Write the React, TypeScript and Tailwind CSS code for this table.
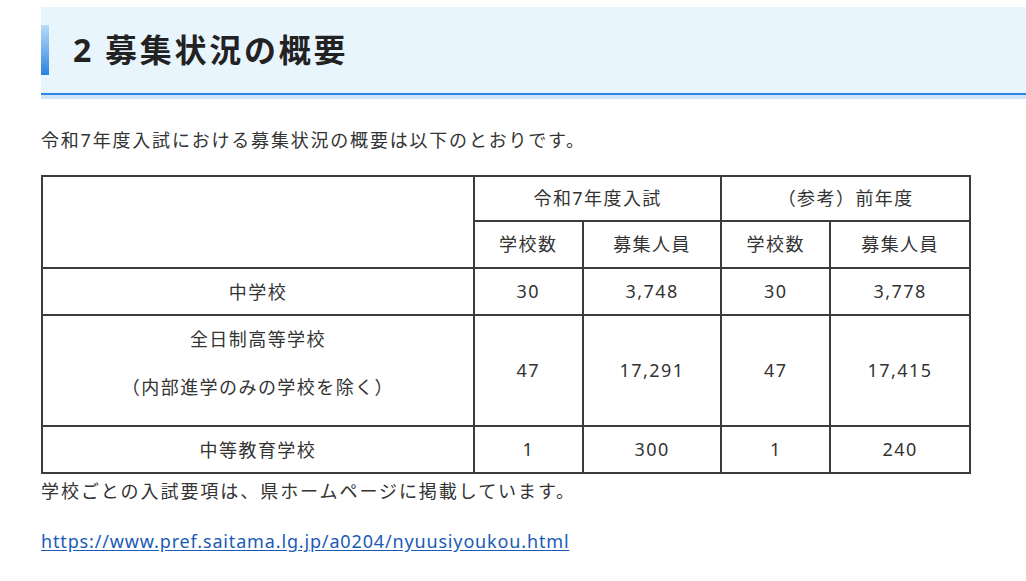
const font = {
  fontFamily: '"Noto Sans", "Noto Sans CJK JP", sans-serif',
};

type Row = {
  label: string[];
  cur: [string, string];
  prev: [string, string];
  tall?: boolean;
};

const rows: Row[] = [
  { label: ["中学校"], cur: ["30", "3,748"], prev: ["30", "3,778"] },
  {
    label: ["全日制高等学校", "（内部進学のみの学校を除く）"],
    cur: ["47", "17,291"],
    prev: ["47", "17,415"],
    tall: true,
  },
  { label: ["中等教育学校"], cur: ["1", "300"], prev: ["1", "240"] },
];

const cell = "border-2 border-[#3c3c3c] text-center align-middle";

export default function App() {
  return (
    <div
      className="w-[1026px] h-[581px] bg-white text-[#333] overflow-hidden"
      style={font}>
      <div className="pl-[41px] pt-[7px]">
        <div className="bg-[#e8f5fd] h-[88px] flex items-center border-b-2 border-[#2e86de]">
          <div className="w-[8px] h-[50px] bg-gradient-to-b from-[#b6dcf6] to-[#2583e0]" />
          <h2 className="ml-[24px] text-[32px] font-bold text-[#222] tracking-[0.085em]">
            2 募集状況の概要
          </h2>
        </div>
        <div className="h-[4px] bg-[#cfe6f8]" />

        <p className="mt-[27px] text-[18px] tracking-[0.1em] leading-[28px]">
          令和7年度入試における募集状況の概要は以下のとおりです。
        </p>

        <table className="mt-[21px] w-[930px] border-collapse text-[18px] tracking-[0.08em]">
          <colgroup>
            <col className="w-[433px]" />
            <col className="w-[109px]" />
            <col className="w-[139px]" />
            <col className="w-[109px]" />
            <col className="w-[140px]" />
          </colgroup>
          <tbody>
            <tr className="h-[45px]">
              <td rowSpan={2} className={cell}></td>
              <td colSpan={2} className={cell}>
                令和7年度入試
              </td>
              <td colSpan={2} className={cell}>
                （参考）前年度
              </td>
            </tr>
            <tr className="h-[47px]">
              <td className={cell}>学校数</td>
              <td className={cell}>募集人員</td>
              <td className={cell}>学校数</td>
              <td className={cell}>募集人員</td>
            </tr>
            {rows.map((r) => (
              <tr key={r.label[0]} className={r.tall ? "h-[111px]" : "h-[47px]"}>
                <td className={cell}>
                  <div className={r.tall ? "pb-[16px]" : ""}>
                    {r.label.map((l, i) => (
                      <div
                        key={l}
                        className={i > 0 ? "mt-[20px] leading-[28px]" : "leading-[28px]"}>
                        {l}
                      </div>
                    ))}
                  </div>
                </td>
                <td className={cell}>{r.cur[0]}</td>
                <td className={cell}>{r.cur[1]}</td>
                <td className={cell}>{r.prev[0]}</td>
                <td className={cell}>{r.prev[1]}</td>
              </tr>
            ))}
          </tbody>
        </table>

        <p className="mt-[3px] text-[18px] tracking-[0.108em] leading-[28px]">
          学校ごとの入試要項は、県ホームページに掲載しています。
        </p>
        <p className="mt-[22px] text-[18px] leading-[28px]">
          <a
            href="#"
            className="text-[#1a5bb8] underline underline-offset-2 tracking-[0.047em]">
            https://www.pref.saitama.lg.jp/a0204/nyuusiyoukou.html
          </a>
        </p>
      </div>
    </div>
  );
}
